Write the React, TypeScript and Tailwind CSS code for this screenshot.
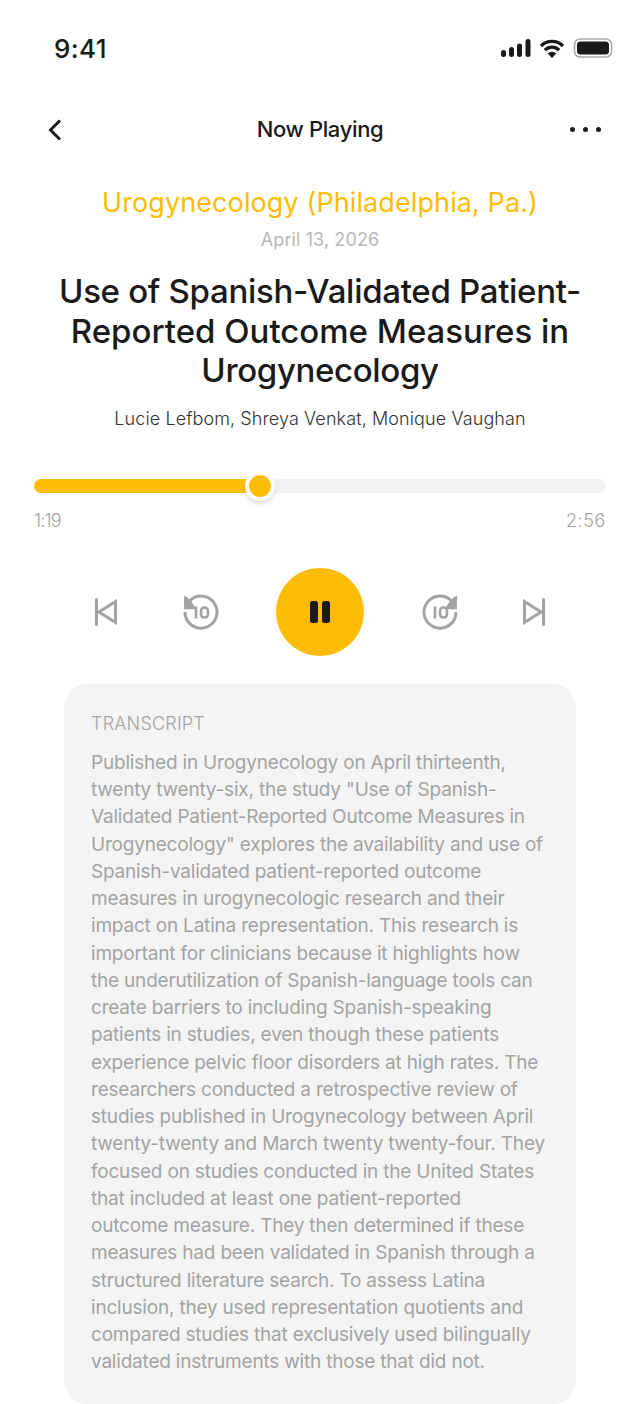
const body = [
  'Published in Urogynecology on April thirteenth,',
  'twenty twenty-six, the study "Use of Spanish-',
  'Validated Patient-Reported Outcome Measures in',
  'Urogynecology" explores the availability and use of',
  'Spanish-validated patient-reported outcome',
  'measures in urogynecologic research and their',
  'impact on Latina representation. This research is',
  'important for clinicians because it highlights how',
  'the underutilization of Spanish-language tools can',
  'create barriers to including Spanish-speaking',
  'patients in studies, even though these patients',
  'experience pelvic floor disorders at high rates. The',
  'researchers conducted a retrospective review of',
  'studies published in Urogynecology between April',
  'twenty-twenty and March twenty twenty-four. They',
  'focused on studies conducted in the United States',
  'that included at least one patient-reported',
  'outcome measure. They then determined if these',
  'measures had been validated in Spanish through a',
  'structured literature search. To assess Latina',
  'inclusion, they used representation quotients and',
  'compared studies that exclusively used bilingually',
  'validated instruments with those that did not.',
];

function Replay({ flip }: { flip?: boolean }) {
  return (
    <svg width="36" height="36" viewBox="0 0 36 36" fill="none" stroke="#a3a3a3" strokeWidth="3" style={flip ? { transform: 'scaleX(-1)' } : undefined}>
      <path d="M7 6.5A16 16 0 1 1 2 18" />
      <path d="M2 3V14.5H12L7 6.5Z" fill="#a3a3a3" strokeWidth="1.5" strokeLinejoin="miter" />
      <path d="M2.75 3V15" />
      <g transform={flip ? 'translate(36 0) scale(-1 1)' : undefined} strokeWidth="2.6">
        <path d="M13 12.5V24.5" />
        <rect x="18" y="13.5" width="7" height="10" rx="3.2" />
      </g>
    </svg>
  );
}

export default function App() {
  return (
    <div className="w-[640px] h-[1404px] bg-white overflow-hidden text-[#1a1a1a] [font-family:Inter,'Noto_Sans',sans-serif]">
      <div className="h-[98px] pl-[54px] pr-[27px] pt-[33px] flex justify-between items-start">
        <span className="text-[26px] leading-[32px] font-medium tracking-[0.4px]">9:41</span>
        <svg width="112" height="24" viewBox="0 0 112 24" className="mt-[5px]">
          <g fill="#1a1a1a">
            <rect x="0" y="12" width="5" height="7" rx="2.5" />
            <rect x="8" y="9" width="5" height="10" rx="2.5" />
            <rect x="16" y="5.5" width="5" height="13.5" rx="2.5" />
            <rect x="24.5" y="1" width="5" height="18" rx="2.5" />
            <path d="M51 20l-4.2-4.6a6 6 0 0 1 8.4 0z" />
          </g>
          <g fill="none" stroke="#1a1a1a" strokeWidth="3.2">
            <path d="M40 8a15.6 15.6 0 0 1 22 0" />
            <path d="M43.8 12.2a10.2 10.2 0 0 1 14.4 0" />
          </g>
          <rect x="73.5" y="1" width="37" height="18" rx="5.5" fill="none" stroke="#a9a9a9" strokeWidth="1.6" />
          <rect x="76" y="3.5" width="32" height="13" rx="3.5" fill="#1a1a1a" />
        </svg>
      </div>
      <div className="h-[62px] px-[48px] grid grid-cols-[1fr_auto_1fr] items-center">
        <svg width="14" height="22" viewBox="0 0 14 22" fill="none" stroke="#1a1a1a" strokeWidth="3" className="mt-[1px]">
          <path d="M12 1.5 2.5 11 12 20.5" />
        </svg>
        <span className="text-[22px] font-medium tracking-[-0.35px] whitespace-nowrap">Now Playing</span>
        <div className="flex gap-[8px] justify-end mr-[-9px] mt-[1px]">
          <span className="w-[5px] h-[5px] rounded-full bg-[#1a1a1a]" />
          <span className="w-[5px] h-[5px] rounded-full bg-[#1a1a1a]" />
          <span className="w-[5px] h-[5px] rounded-full bg-[#1a1a1a]" />
        </div>
      </div>
      <div className="text-center pt-[25px]">
        <div className="text-[27px] leading-[36px] tracking-[0.1px] text-[#ffbc05]">Urogynecology (Philadelphia, Pa.)</div>
        <div className="text-[18px] leading-[24px] tracking-[0.1px] mt-[7px] text-[#b8b8b8]">April 13, 2026</div>
        <h1 className="text-[33px] leading-[39.6px] font-medium mt-[20px]">
          <span className="tracking-[-0.3px]">Use of Spanish-Validated Patient-</span><br />
          Reported Outcome Measures in<br />
          <span className="tracking-[-0.35px]">Urogynecology</span>
        </h1>
        <div className="text-[18px] leading-[24px] tracking-[0.1px] font-light mt-[16px] text-[#333]">Lucie Lefbom, Shreya Venkat, Monique Vaughan</div>
      </div>
      <div className="px-[34px] mt-[48px]">
        <div className="relative h-[14px] rounded-full bg-[#f2f2f2]">
          <div className="h-full w-[226px] rounded-full bg-[#ffbc05]" />
          <div className="absolute left-[211px] top-[-8px] w-[30px] h-[30px] rounded-full bg-[#ffbc05] border-[4px] border-white shadow-md" />
        </div>
        <div className="flex justify-between mt-[16px] text-[18px] leading-[24px] font-light text-[#a3a3a3]">
          <span className="tracking-[-0.8px]">1:19</span>
          <span className="tracking-[0.6px]">2:56</span>
        </div>
      </div>
      <div className="flex items-center justify-center mt-[35px]">
        <svg width="24" height="28" viewBox="0 0 24 28" fill="none" stroke="#a3a3a3" strokeWidth="3">
          <path d="M2.5 1.5v25" strokeLinecap="round" />
          <path d="M21.5 3.5V24.5L5 14Z" />
        </svg>
        <div className="ml-[65px]"><Replay /></div>
        <div className="ml-[57px] w-[88px] h-[88px] rounded-full bg-[#ffbc05] flex items-center justify-center gap-[4px]">
          <span className="w-[8px] h-[22px] rounded-[2.5px] bg-[#1a1a1a]" />
          <span className="w-[8px] h-[22px] rounded-[2.5px] bg-[#1a1a1a]" />
        </div>
        <div className="ml-[58px]"><Replay flip /></div>
        <svg width="24" height="28" viewBox="0 0 24 28" fill="none" stroke="#a3a3a3" strokeWidth="3" className="ml-[64px]">
          <path d="M21.5 1.5v25" strokeLinecap="round" />
          <path d="M2.5 3.5V24.5L19 14Z" />
        </svg>
      </div>
      <div className="mx-[64px] mt-[28px] h-[720px] rounded-[24px] bg-[#f4f4f4] pl-[27px] pt-[27px] text-[#a3a3a3]">
        <div className="text-[18px] leading-[24px] tracking-[0.2px] font-light pt-[1px]">TRANSCRIPT</div>
        <div className="mt-[13px] text-[19px] leading-[27.25px] tracking-[-0.2px] whitespace-nowrap">
          {body.map((l) => <div key={l}>{l}</div>)}
        </div>
      </div>
    </div>
  );
}
